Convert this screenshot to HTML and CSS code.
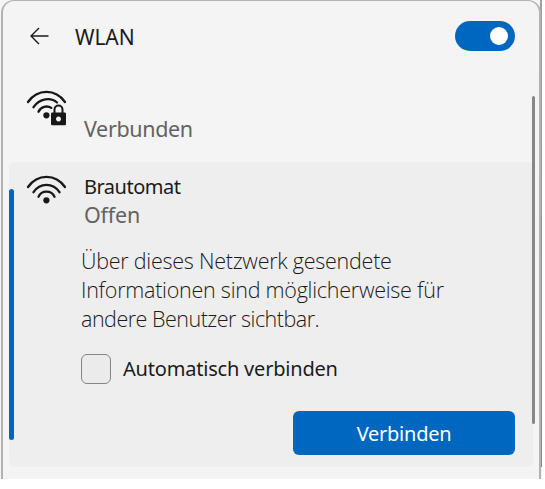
FILE: index.html
```
<!DOCTYPE html>
<html lang="de">
<head>
<meta charset="utf-8">
<title>WLAN</title>
<link rel="stylesheet" href="styles.css">
</head>
<body>
<div class="desktop">
<main class="flyout">
  <header class="header">
    <svg class="back" viewBox="0 0 20 18" width="20" height="18"><path d="M18.500 9H1.500M9 1L1 9L9 17"/></svg>
    <h1 class="title">WLAN</h1>
    <span class="switch"></span>
  </header>
  <section class="network connected">
    <svg class="wifi" viewBox="0 0 42 38" width="42" height="38">
      <path class="arc" d="M2 12C11.500-1.500 29.500-1.500 39 12M7.500 17.200C13.500 8 25 7 31 12.500M12.500 21.800C14.800 16.800 21 15 25.300 17.900"/>
      <circle cx="20.400" cy="25.300" r="3.100"/>
      <path class="shackle" d="M28.500 23V19.500a4 4 0 0 1 8 0V23"/>
      <path fill-rule="evenodd" d="M26.300 22.500h12.400q1.300 0 1.300 1.300v10.200q0 1.300-1.300 1.300h-12.400q-1.300 0-1.300-1.300v-10.200q0-1.300 1.300-1.300zM32.500 26.400a2.500 2.500 0 1 0 .01 0z"/>
    </svg>
    <span class="status">Verbunden</span>
  </section>
  <section class="network selected">
    <svg class="wifi" viewBox="0 0 42 38" width="42" height="38">
      <path class="arc" d="M2 12C11.500-1.500 29.500-1.500 39 12M7.500 17.200C14 7.500 27 7.500 33.500 17.200M12.500 21.800C15.500 15 25.500 15 28.500 21.800"/>
      <circle cx="20.400" cy="25.300" r="3.100"/>
    </svg>
    <div class="names"><span class="name">Brautomat</span><span class="open">Offen</span></div>
    <p class="notice"><span class="l1">Über dieses Netzwerk gesendete</span><br><span class="l2">Informationen sind möglicherweise für</span><br><span class="l3">andere Benutzer sichtbar.</span></p>
    <label class="auto"><span class="box"></span><span class="autotext">Automatisch verbinden</span></label>
    <button class="connect"><span>Verbinden</span></button>
    <i class="accent"></i>
  </section>
  <i class="scrollbar"></i>
</main>
</div>
</body>
</html>
```
FILE: styles.css
```
* { box-sizing: border-box; }
body { margin: 0; background: #fff; color: #1b1b1b; font: 20px/29px "Noto Sans", sans-serif; overflow: hidden; }
.desktop { width: 542px; height: 479px; background: linear-gradient(#a2a2a2, #888) right top / 2px 467px no-repeat, #f5f5f5; padding-left: 1px; }
.flyout { position: relative; width: 540px; height: 479px; border: 2px solid #b2b2b2; border-top-width: 1px; border-bottom: 0; border-radius: 13px 13px 0 0; background: #f4f4f4; }
.header { height: 76px; display: flex; align-items: center; padding: 0 24px 6px 27px; }
.back { fill: none; stroke: #1b1b1b; stroke-width: 1.4; margin-left: -0.500px; }
.title { margin: 2px 0 0 25.500px; font-size: 21px; font-weight: 400; letter-spacing: -0.1px; }
.switch { margin-left: auto; width: 60px; height: 30px; border-radius: 15px; background: #0067c0; padding: 6px 7px 6px 35px; }
.switch::before { content: ""; display: block; width: 18px; height: 18px; border-radius: 50%; background: #fff; }
.network { display: grid; grid-template-columns: 42px 1fr; column-gap: 16px; }
.connected { height: 85px; padding: 12px 0 0 23px; }
.connected .wifi { margin-top: 0.500px; }
.status { color: #636363; margin-top: 25px; font-size: 21.500px; letter-spacing: -0.35px; }
.wifi { fill: #171717; }
.arc { fill: none; stroke: #171717; stroke-width: 2.300; stroke-linecap: round; }
.shackle { fill: none; stroke: #171717; stroke-width: 2; }
.selected { position: relative; align-content: start; margin: 0 6px; height: 305px; background: #eee; border-radius: 5px; padding: 10px 18px 0 17px; grid-template-rows: 74px 87px auto auto; }
.selected .wifi { margin-top: 3px; }
.names { display: flex; flex-direction: column; letter-spacing: -0.5px; }
.open { color: #636363; font-size: 21.500px; letter-spacing: -0.2px; margin-top: -1px; }
.notice { grid-column: 1 / -1; margin: 0 0 0 55px; font: 350 21.500px/29px "Open Sans", "Noto Sans", sans-serif; white-space: nowrap; letter-spacing: -0.250px; }
.l3 { letter-spacing: -0.500px; }
.auto { grid-column: 1 / -1; display: flex; align-items: center; gap: 12px; margin: 21px 0 0 55px; height: 30px; }
.autotext { letter-spacing: -0.2px; margin-top: -2px; }
.box { width: 30px; height: 30px; border: 1.500px solid #858585; border-radius: 6px; background: #ebebeb; }
.connect { grid-column: 1 / -1; justify-self: end; width: 222px; height: 44px; margin-top: 27px; padding: 0; border: 0; border-radius: 6px; background: #0067c0; color: #fff; font: 20px/29px "Noto Sans", sans-serif; letter-spacing: -0.250px; }
.accent { position: absolute; left: 0; top: 27px; width: 5px; height: 251px; border-radius: 3px; background: #0067c0; }
.scrollbar { position: absolute; right: 4px; top: 95px; width: 3px; height: 328px; border-radius: 2px; background: #878787; }
```
